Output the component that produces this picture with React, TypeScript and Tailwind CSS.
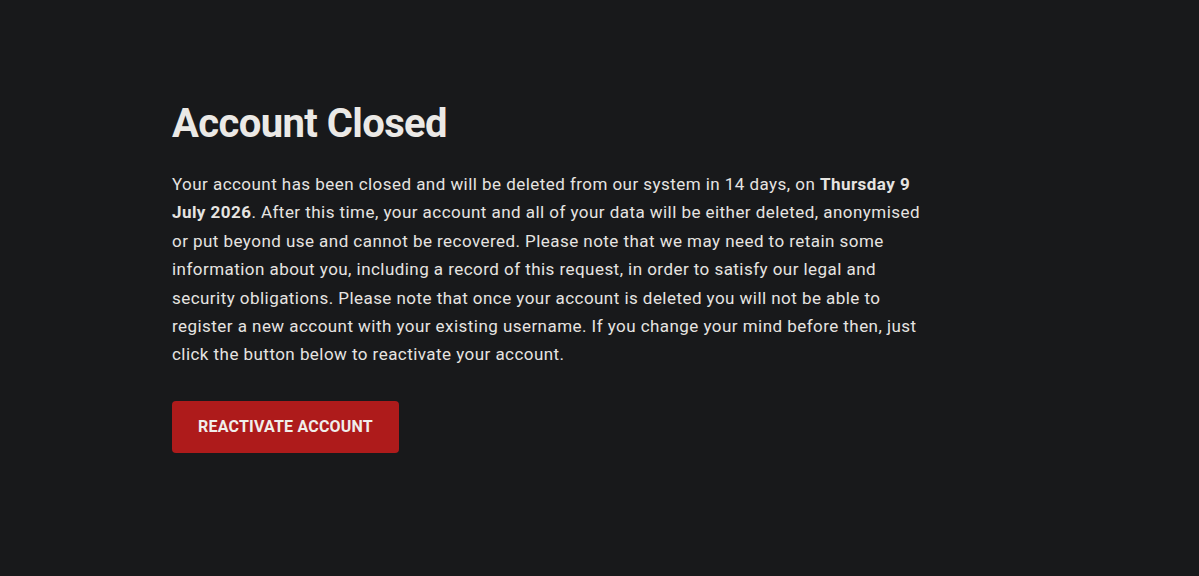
export default function App() {
  return (
    <div className="min-h-screen w-full bg-[#18191b] text-[#e6e4e1]" style={{ fontFamily: 'Roboto, "Liberation Sans", sans-serif' }}>
      <div className="pl-[172px] pt-[98px]">
        <h1 className="text-[40px] leading-[52px] font-bold text-[#ebe9e6] tracking-[-0.6px]">Account Closed</h1>
        <p className="mt-[20px] w-[758px] text-[17px] leading-[28.4px] tracking-[0.45px]">
          Your account has been closed and will be deleted from our system in 14 days, on{" "}
          <strong className="font-bold">Thursday 9 July 2026</strong>. After this time, your account and all of your data will be
          either deleted, anonymised or put beyond use and cannot be recovered. Please note that we may need to retain some
          information about you, including a record of this request, in order to satisfy our legal and security obligations.
          Please note that once your account is deleted you will not be able to register a new account with your existing
          username. If you change your mind before then, just click the button below to reactivate your account.
        </p>
        <button className="mt-[32px] h-[52px] w-[227px] rounded-[4px] bg-[#ae1b1b] text-[16px] font-bold uppercase tracking-[0.2px] text-[#f0eeeb]">
          Reactivate Account
        </button>
      </div>
    </div>
  );
}
